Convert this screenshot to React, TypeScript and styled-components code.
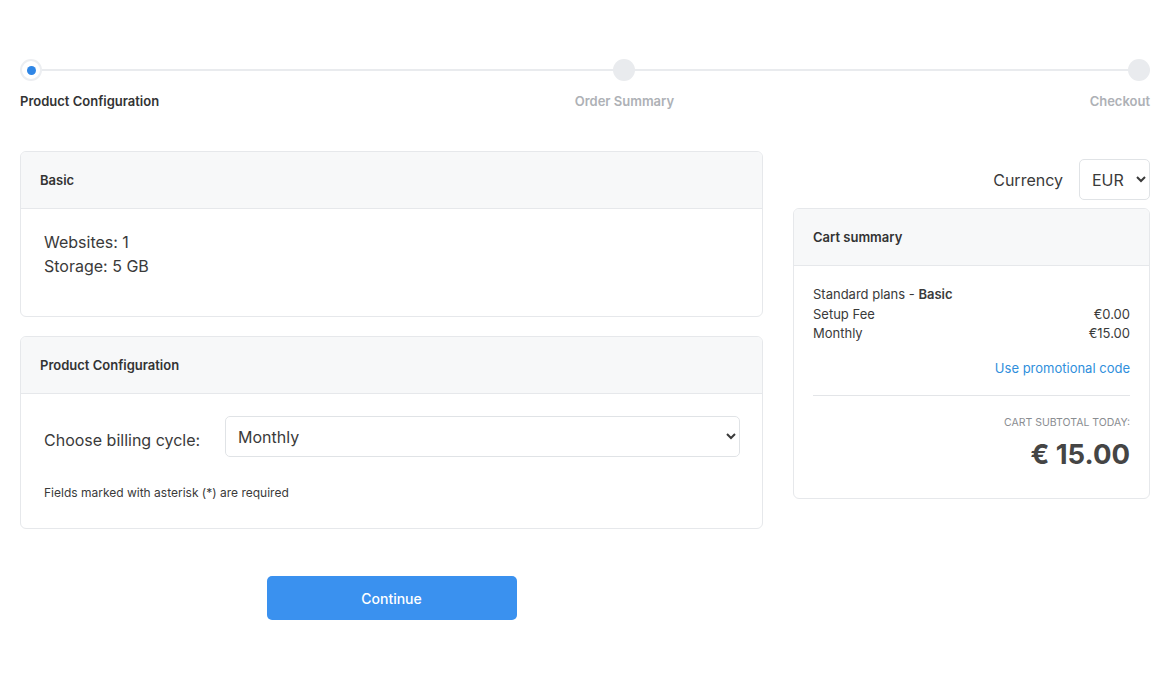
import React from 'react'
import styled, { createGlobalStyle } from 'styled-components'

const GlobalStyle = createGlobalStyle`
  * { box-sizing: border-box; }
  body {
    margin: 0;
    background: #fff;
    font-family: Inter, "Noto Sans", sans-serif;
    color: #3a3a3a;
  }
`

const Page = styled.div`
  width: 1170px;
  padding: 59px 20px 80px;
`

const Stepper = styled.div`
  position: relative;
  display: flex;
  justify-content: space-between;
  margin-bottom: 42px;

  &::before {
    content: '';
    position: absolute;
    left: 11px;
    right: 11px;
    top: 10px;
    height: 2px;
    background: #e9ebee;
  }
`

const Step = styled.div<{ $align: 'flex-start' | 'center' | 'flex-end' }>`
  position: relative;
  display: flex;
  flex-direction: column;
  align-items: ${p => p.$align};
  gap: 12px;
`

const Dot = styled.div<{ $active?: boolean }>`
  width: 22px;
  height: 22px;
  border-radius: 50%;
  background: ${p => (p.$active ? '#fff' : '#e9ebee')};
  border: ${p => (p.$active ? '2px solid #eceef1' : 'none')};
  display: flex;
  align-items: center;
  justify-content: center;

  &::after {
    content: '';
    display: ${p => (p.$active ? 'block' : 'none')};
    width: 9px;
    height: 9px;
    border-radius: 50%;
    background: #2f86e6;
  }
`

const StepLabel = styled.span<{ $active?: boolean }>`
  font-size: 13px;
  font-weight: 600;
  color: ${p => (p.$active ? '#333' : '#aeb1b6')};
`

const Columns = styled.div`
  display: grid;
  grid-template-columns: 743px 357px;
  gap: 30px;
  align-items: start;
`

const LeftCol = styled.div`
  display: flex;
  flex-direction: column;
  gap: 19px;
`

const RightCol = styled.div`
  display: flex;
  flex-direction: column;
  gap: 8px;
  padding-top: 8px;
`

const Card = styled.div`
  border: 1px solid #e6e8eb;
  border-radius: 6px;
  overflow: hidden;
  background: #fff;
`

const CardHeader = styled.div`
  height: 57px;
  display: flex;
  align-items: center;
  padding: 0 19px;
  background: #f7f8f9;
  border-bottom: 1px solid #e6e8eb;
  font-size: 13px;
  font-weight: 600;
  color: #333;
`

const CardBody = styled.div<{ $pad: string }>`
  padding: ${p => p.$pad};
`

const Feature = styled.div`
  font-size: 16px;
  line-height: 24px;
  color: #3a3a3a;
`

const FieldRow = styled.div`
  display: flex;
  align-items: center;
`

const FieldLabel = styled.label`
  flex: none;
  width: 181px;
  white-space: nowrap;
  font-size: 16px;
  color: #3a3a3a;
  padding-top: 6px;
`

const Select = styled.select<{ $width?: string }>`
  width: ${p => p.$width ?? 'auto'};
  flex: ${p => (p.$width ? 'none' : '1')};
  height: 41px;
  padding: 0 6px 0 8px;
  font-family: inherit;
  font-size: 16px;
  color: #3a3a3a;
  background: #fff;
  border: 1px solid #e0e3e6;
  border-radius: 5px;
  outline: none;
`

const Note = styled.div`
  margin-top: 28px;
  font-size: 12px;
  color: #3a3a3a;
`

const ButtonRow = styled.div`
  display: flex;
  justify-content: center;
  padding-top: 28px;
`

const PrimaryButton = styled.button`
  width: 250px;
  height: 44px;
  border: none;
  border-radius: 5px;
  background: #3a91ef;
  color: #fff;
  font-family: inherit;
  font-size: 14px;
  font-weight: 500;
  cursor: pointer;
`

const CurrencyRow = styled.div`
  display: flex;
  justify-content: flex-end;
  align-items: center;
  gap: 16px;
  font-size: 16px;
  color: #3a3a3a;
`

const SummaryLine = styled.div`
  display: flex;
  justify-content: space-between;
  font-size: 13px;
  line-height: 19.5px;
  color: #3a3a3a;

  b {
    font-weight: 600;
  }
`

const PromoLink = styled.a`
  display: block;
  text-align: right;
  margin-top: 16px;
  font-size: 13px;
  color: #2f8fdc;
  text-decoration: none;
  cursor: pointer;
`

const Divider = styled.hr`
  border: none;
  border-top: 1px solid #e3e5e8;
  margin: 19px 0 20px;
`

const SubtotalLabel = styled.div`
  text-align: right;
  font-size: 10.5px;
  color: #8a8d91;
  text-transform: uppercase;
`

const SubtotalValue = styled.div`
  text-align: right;
  font-size: 27.5px;
  font-weight: 700;
  color: #454545;
  margin-top: 8px;
`

const App: React.FC = () => {
  return (
    <>
      <GlobalStyle />
      <Page>
        <Stepper>
          <Step $align="flex-start">
            <Dot $active />
            <StepLabel $active>Product Configuration</StepLabel>
          </Step>
          <Step $align="center">
            <Dot />
            <StepLabel>Order Summary</StepLabel>
          </Step>
          <Step $align="flex-end">
            <Dot />
            <StepLabel>Checkout</StepLabel>
          </Step>
        </Stepper>

        <Columns>
          <LeftCol>
            <Card>
              <CardHeader>Basic</CardHeader>
              <CardBody $pad="21px 23px 38px">
                <Feature>Websites: 1</Feature>
                <Feature>Storage: 5 GB</Feature>
              </CardBody>
            </Card>

            <Card>
              <CardHeader>Product Configuration</CardHeader>
              <CardBody $pad="22px 22px 28px 23px">
                <FieldRow>
                  <FieldLabel>Choose billing cycle:</FieldLabel>
                  <Select defaultValue="monthly">
                    <option value="monthly">Monthly</option>
                    <option value="quarterly">Quarterly</option>
                    <option value="annually">Annually</option>
                  </Select>
                </FieldRow>
                <Note>Fields marked with asterisk (*) are required</Note>
              </CardBody>
            </Card>

            <ButtonRow>
              <PrimaryButton>Continue</PrimaryButton>
            </ButtonRow>
          </LeftCol>

          <RightCol>
            <CurrencyRow>
              <span>Currency</span>
              <Select $width="71px" defaultValue="EUR">
                <option value="EUR">EUR</option>
                <option value="USD">USD</option>
              </Select>
            </CurrencyRow>

            <Card>
              <CardHeader>Cart summary</CardHeader>
              <CardBody $pad="19px 19px 27px">
                <SummaryLine>
                  <span>
                    Standard plans - <b>Basic</b>
                  </span>
                </SummaryLine>
                <SummaryLine>
                  <span>Setup Fee</span>
                  <span>€0.00</span>
                </SummaryLine>
                <SummaryLine>
                  <span>Monthly</span>
                  <span>€15.00</span>
                </SummaryLine>
                <PromoLink>Use promotional code</PromoLink>
                <Divider />
                <SubtotalLabel>Cart subtotal today:</SubtotalLabel>
                <SubtotalValue>€ 15.00</SubtotalValue>
              </CardBody>
            </Card>
          </RightCol>
        </Columns>
      </Page>
    </>
  )
}

export default App
